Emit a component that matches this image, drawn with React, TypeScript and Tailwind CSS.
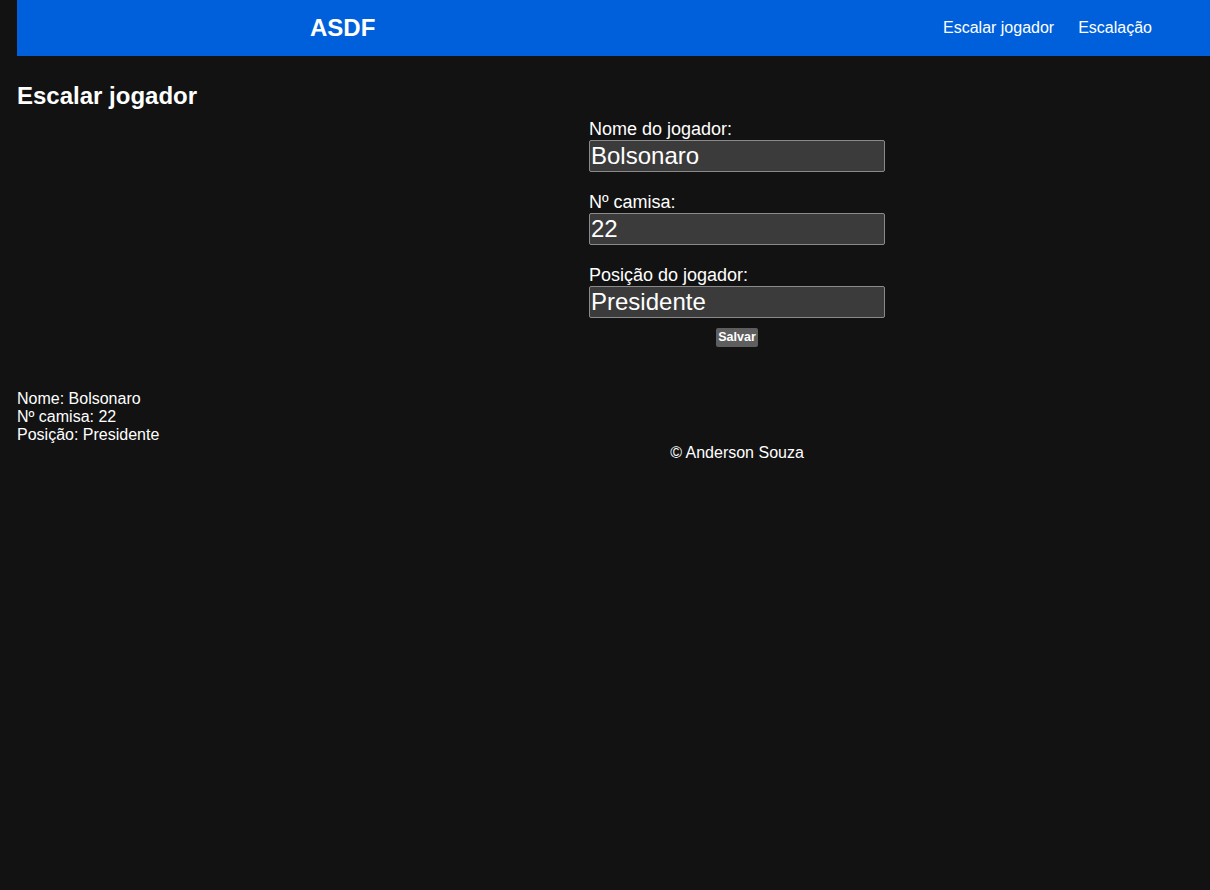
const font = { fontFamily: '"Liberation Sans", Arial, sans-serif' };

function Field({ label, value }: { label: string; value: string }) {
  return (
    <div className="flex flex-col">
      <label className="block text-[18px] leading-[20px] text-white">{label}</label>
      <input
        readOnly
        value={value}
        className="mt-px h-[32px] w-[296px] rounded-[2px] border border-[#8a8a8a] bg-[#3b3b3b] px-[1px] text-[24px] leading-[28px] text-white outline-none"
      />
    </div>
  );
}

export default function App() {
  const player = { nome: "Bolsonaro", camisa: "22", posicao: "Presidente" };

  return (
    <div className="min-h-[890px] bg-[#121212] pl-[17px] text-white" style={font}>
      <header className="flex h-14 items-center justify-between bg-[#005fdb] pl-[293px] pr-[58px]">
        <span className="text-[24px] font-bold">ASDF</span>
        <nav className="flex gap-6 text-[16px]">
          <a href="#">Escalar jogador</a>
          <a href="#">Escalação</a>
        </nav>
      </header>

      <main>
        <h2 className="mt-[26px] text-[24px] font-bold leading-[28px]">Escalar jogador</h2>

        <form className="ml-[572px] mt-[9px] flex w-[296px] flex-col gap-[20px]">
          <Field label="Nome do jogador:" value={player.nome} />
          <Field label="Nº camisa:" value={player.camisa} />
          <Field label="Posição do jogador:" value={player.posicao} />
        </form>
        <div className="ml-[572px] mt-[10px] flex w-[296px] justify-center">
          <button
            type="button"
            className="h-[19px] rounded-[2px] bg-[#5e5e5e] px-[2px] text-[12.5px] font-bold leading-[19px] text-white"
          >
            Salvar
          </button>
        </div>

        <div className="mt-[43px] text-[16px] leading-[18px]">
          <p>Nome: {player.nome}</p>
          <p>Nº camisa: {player.camisa}</p>
          <p>Posição: {player.posicao}</p>
        </div>
      </main>

      <footer className="ml-[572px] w-[296px] text-center text-[16px] leading-[18px]">© Anderson Souza</footer>
    </div>
  );
}
